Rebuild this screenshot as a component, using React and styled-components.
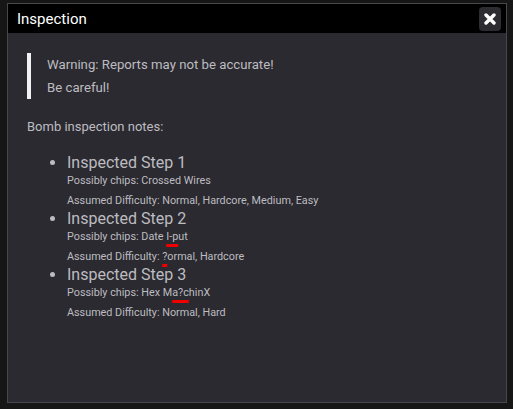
import React from 'react';
import styled, { createGlobalStyle } from 'styled-components';

const Global = createGlobalStyle`
  html, body {
    margin: 0;
    padding: 0;
    background: #161616;
    font-family: Roboto, "Liberation Sans", sans-serif;
  }
`;

const Page = styled.div`
  padding: 3px 6px 0 7px;
  height: 409px;
  box-sizing: border-box;
`;

const Modal = styled.div`
  width: 500px;
  height: 400px;
  box-sizing: border-box;
  border: 1px solid #48474c;
  background: #2b2a30;
  display: flex;
  flex-direction: column;
`;

const Header = styled.div`
  height: 29px;
  background: #000;
  display: flex;
  align-items: center;
  justify-content: space-between;
  padding: 0 5px 0 9px;
`;

const Title = styled.h1`
  margin: 0;
  font-size: 15px;
  font-weight: 400;
  color: #fff;
`;

const Close = styled.button`
  width: 22px;
  height: 24px;
  border: none;
  border-radius: 4px;
  background: #2d2c31;
  display: flex;
  align-items: center;
  justify-content: center;
  padding: 0;
`;

const Body = styled.div`
  padding: 20px 19px;
  color: #bdbcc0;
  font-size: 13px;
`;

const Quote = styled.blockquote`
  margin: 0;
  border-left: 4px solid #f2f2f2;
  padding-left: 16px;
  line-height: 23px;
  font-size: 13.2px;
`;

const Notes = styled.p`
  margin: 16px 0 0;
  line-height: 23px;
`;

const List = styled.ul`
  margin: 16px 0 0;
  padding-left: 40px;
`;

const Item = styled.li`
  line-height: 18px;
  &::marker {
    font-size: 16px;
  }
`;

const Step = styled.div`
  font-size: 16px;
  line-height: 18px;
`;

const Sub = styled.div`
  font-size: 10.8px;
  line-height: 18px;
  margin-top: ${p => (p.gap ? '2px' : '0')};
`;

const Bad = styled.span`
  text-decoration: underline;
  text-decoration-color: #e00;
  text-decoration-thickness: 3px;
  text-underline-offset: 4px;
`;

const steps = [
  { title: 'Inspected Step 1', chips: 'Crossed Wires', diff: 'Normal, Hardcore, Medium, Easy' },
  { title: 'Inspected Step 2', chips: <>Date <Bad>I-p</Bad>ut</>, diff: <><Bad>?</Bad>ormal, Hardcore</> },
  { title: 'Inspected Step 3', chips: <>Hex M<Bad>a?c</Bad>hinX</>, diff: 'Normal, Hard' },
];

export default function App() {
  return (
    <Page>
      <Global />
      <Modal>
        <Header>
          <Title>Inspection</Title>
          <Close aria-label="close">
            <svg width="12" height="12" viewBox="0 0 12 12">
              <path d="M2 2 L10 10 M10 2 L2 10" stroke="#fff" strokeWidth="3.4" strokeLinecap="round" />
            </svg>
          </Close>
        </Header>
        <Body>
          <Quote>
            <div>Warning: Reports may not be accurate!</div>
            <div>Be careful!</div>
          </Quote>
          <Notes>Bomb inspection notes:</Notes>
          <List>
            {steps.map((s, i) => (
              <Item key={i}>
                <Step>{s.title}</Step>
                <Sub>Possibly chips: {s.chips}</Sub>
                <Sub gap>Assumed Difficulty: {s.diff}</Sub>
              </Item>
            ))}
          </List>
        </Body>
      </Modal>
    </Page>
  );
}
